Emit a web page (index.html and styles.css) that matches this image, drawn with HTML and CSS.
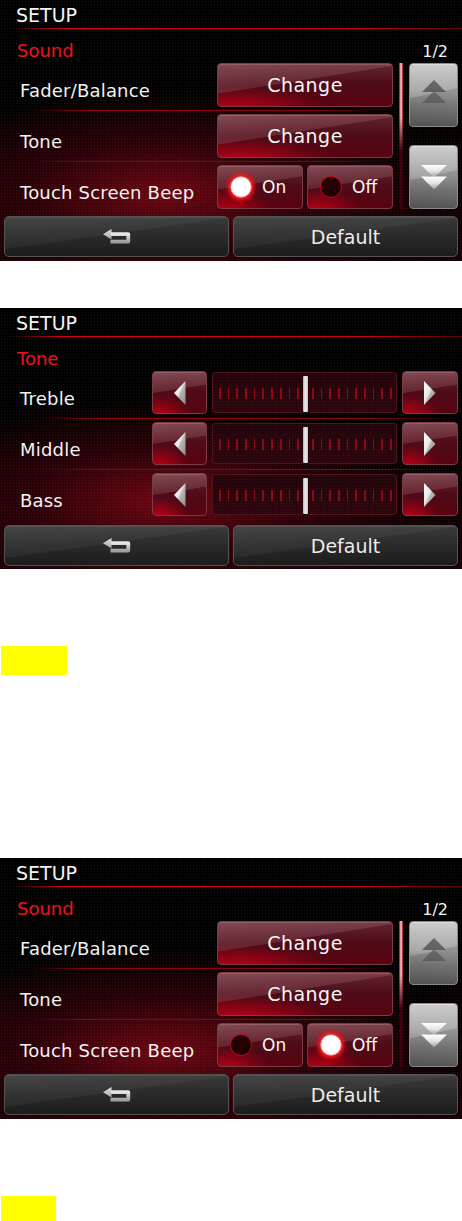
FILE: index.html
```html
<!DOCTYPE html>
<html>
<head>
<meta charset="utf-8">
<title>Setup</title>
<link rel="stylesheet" href="styles.css">
</head>
<body>
<svg class="defs" width="0" height="0">
  <defs>
    <linearGradient id="silver" x1="0" y1="0" x2="0" y2="1">
      <stop offset="0" stop-color="#ffffff"/>
      <stop offset="0.5" stop-color="#e4e4e4"/>
      <stop offset="1" stop-color="#9a9a9a"/>
    </linearGradient>
    <linearGradient id="silverh" x1="0" y1="0" x2="1" y2="1">
      <stop offset="0" stop-color="#ffffff"/>
      <stop offset="0.45" stop-color="#e8e8e8"/>
      <stop offset="0.55" stop-color="#b4b4b4"/>
      <stop offset="1" stop-color="#8c8c8c"/>
    </linearGradient>
    <linearGradient id="backg" x1="0" y1="0" x2="0" y2="1">
      <stop offset="0" stop-color="#e6e6e6"/>
      <stop offset="1" stop-color="#a0a0a0"/>
    </linearGradient>
  </defs>
</svg>

<div class="panel">
  <div class="hdr">SETUP</div>
  <div class="sub"><span class="sect">Sound</span><span class="page">1/2</span></div>
  <div class="body">
    <div class="rows narrow">
      <div class="row">
        <div class="lbl">Fader/Balance</div>
        <div class="ctrl"><div class="rbtn full">Change</div></div>
      </div>
      <div class="sep"></div>
      <div class="row">
        <div class="lbl">Tone</div>
        <div class="ctrl"><div class="rbtn full">Change</div></div>
      </div>
      <div class="sep"></div>
      <div class="row">
        <div class="lbl">Touch Screen Beep</div>
        <div class="ctrl">
          <div class="rbtn half"><span class="dot on"></span><span class="opt">On</span></div>
          <div class="rbtn half"><span class="dot"></span><span class="opt">Off</span></div>
        </div>
      </div>
    </div>
    <div class="track"><div class="thumb"></div></div>
    <div class="scroll">
      <div class="gbtn up">
        <svg width="24" height="24" viewBox="0 0 24 24"><polygon points="12,0 24,12 0,12" fill="rgba(50,50,50,0.6)"/><polygon points="12,11 24,23 0,23" fill="rgba(60,60,60,0.45)"/></svg>
      </div>
      <div class="gbtn">
        <svg width="26" height="25" viewBox="0 0 26 25"><polygon points="0,0 26,0 13,12.5" fill="url(#silver)"/><polygon points="0,11.5 26,11.5 13,24.5" fill="url(#silver)"/></svg>
      </div>
    </div>
  </div>
  <div class="foot">
    <div class="dbtn"><svg width="28" height="16" viewBox="0 0 28 16"><polygon points="0,5.3 8.5,0 8.5,10.6" fill="url(#backg)"/><path d="M8 5.2 H25.3 V12.6 H7.5" fill="none" stroke="url(#backg)" stroke-width="3.8" stroke-linejoin="round"/></svg></div>
    <div class="dbtn">Default</div>
  </div>
</div>

<div class="panel p2">
  <div class="hdr">SETUP</div>
  <div class="sub"><span class="sect">Tone</span></div>
  <div class="body">
    <div class="rows wide">
      <div class="row">
        <div class="lbl">Treble</div>
        <div class="abtn"><svg width="12" height="24" viewBox="0 0 12 24"><polygon points="11.5,0 11.5,24 0,12" fill="url(#silverh)"/></svg></div>
        <div class="slider"><div class="ticks"><i></i><i></i><i></i><i></i><i></i><i></i><i></i><i></i><i></i><i></i></div><div class="knob"></div><div class="ticks"><i></i><i></i><i></i><i></i><i></i><i></i><i></i><i></i><i></i><i></i></div></div>
        <div class="abtn"><svg width="12" height="24" viewBox="0 0 12 24"><polygon points="0,0 0,24 11.5,12" fill="url(#silverh)"/></svg></div>
      </div>
      <div class="sep"></div>
      <div class="row">
        <div class="lbl">Middle</div>
        <div class="abtn"><svg width="12" height="24" viewBox="0 0 12 24"><polygon points="11.5,0 11.5,24 0,12" fill="url(#silverh)"/></svg></div>
        <div class="slider"><div class="ticks"><i></i><i></i><i></i><i></i><i></i><i></i><i></i><i></i><i></i><i></i></div><div class="knob"></div><div class="ticks"><i></i><i></i><i></i><i></i><i></i><i></i><i></i><i></i><i></i><i></i></div></div>
        <div class="abtn"><svg width="12" height="24" viewBox="0 0 12 24"><polygon points="0,0 0,24 11.5,12" fill="url(#silverh)"/></svg></div>
      </div>
      <div class="sep"></div>
      <div class="row">
        <div class="lbl">Bass</div>
        <div class="abtn"><svg width="12" height="24" viewBox="0 0 12 24"><polygon points="11.5,0 11.5,24 0,12" fill="url(#silverh)"/></svg></div>
        <div class="slider"><div class="ticks"><i></i><i></i><i></i><i></i><i></i><i></i><i></i><i></i><i></i><i></i></div><div class="knob"></div><div class="ticks"><i></i><i></i><i></i><i></i><i></i><i></i><i></i><i></i><i></i><i></i></div></div>
        <div class="abtn"><svg width="12" height="24" viewBox="0 0 12 24"><polygon points="0,0 0,24 11.5,12" fill="url(#silverh)"/></svg></div>
      </div>
    </div>
  </div>
  <div class="foot">
    <div class="dbtn"><svg width="28" height="16" viewBox="0 0 28 16"><polygon points="0,5.3 8.5,0 8.5,10.6" fill="url(#backg)"/><path d="M8 5.2 H25.3 V12.6 H7.5" fill="none" stroke="url(#backg)" stroke-width="3.8" stroke-linejoin="round"/></svg></div>
    <div class="dbtn">Default</div>
  </div>
</div>

<div class="mark m1"></div>

<div class="panel p3">
  <div class="hdr">SETUP</div>
  <div class="sub"><span class="sect">Sound</span><span class="page">1/2</span></div>
  <div class="body">
    <div class="rows narrow">
      <div class="row">
        <div class="lbl">Fader/Balance</div>
        <div class="ctrl"><div class="rbtn full">Change</div></div>
      </div>
      <div class="sep"></div>
      <div class="row">
        <div class="lbl">Tone</div>
        <div class="ctrl"><div class="rbtn full">Change</div></div>
      </div>
      <div class="sep"></div>
      <div class="row">
        <div class="lbl">Touch Screen Beep</div>
        <div class="ctrl">
          <div class="rbtn half"><span class="dot"></span><span class="opt">On</span></div>
          <div class="rbtn half"><span class="dot on"></span><span class="opt">Off</span></div>
        </div>
      </div>
    </div>
    <div class="track"><div class="thumb"></div></div>
    <div class="scroll">
      <div class="gbtn up">
        <svg width="24" height="24" viewBox="0 0 24 24"><polygon points="12,0 24,12 0,12" fill="rgba(50,50,50,0.6)"/><polygon points="12,11 24,23 0,23" fill="rgba(60,60,60,0.45)"/></svg>
      </div>
      <div class="gbtn">
        <svg width="26" height="25" viewBox="0 0 26 25"><polygon points="0,0 26,0 13,12.5" fill="url(#silver)"/><polygon points="0,11.5 26,11.5 13,24.5" fill="url(#silver)"/></svg>
      </div>
    </div>
  </div>
  <div class="foot">
    <div class="dbtn"><svg width="28" height="16" viewBox="0 0 28 16"><polygon points="0,5.3 8.5,0 8.5,10.6" fill="url(#backg)"/><path d="M8 5.2 H25.3 V12.6 H7.5" fill="none" stroke="url(#backg)" stroke-width="3.8" stroke-linejoin="round"/></svg></div>
    <div class="dbtn">Default</div>
  </div>
</div>

<div class="mark m2"></div>
</body>
</html>
```

FILE: styles.css
```css
* { box-sizing: border-box; margin: 0; padding: 0; }
html, body { background: #fff; }
body { margin: 0; width: 462px; font-family: "DejaVu Sans", "Liberation Sans", sans-serif; }
.defs { position: absolute; width: 0; height: 0; overflow: hidden; }

.panel {
  width: 462px;
  height: 261px;
  display: flex;
  flex-direction: column;
  color: #f0f0f0;
  overflow: hidden;
  background:
    radial-gradient(rgba(255,255,255,0.05) 0.6px, transparent 1.1px) 0 0 / 3px 3px,
    radial-gradient(ellipse 58% 40% at 36% 74%, rgba(125,6,20,0.85) 0%, rgba(70,0,10,0.55) 50%, rgba(0,0,0,0) 100%),
    linear-gradient(180deg, #000 0%, #000 38%, #160003 100%);
}
.p2 { margin-top: 47px; }
.p3 { margin-top: 183px; }
.mark { background: #ffff00; margin-left: 1px; height: 29px; margin-top: 77px; }
.m1 { width: 66px; }
.m2 { width: 55px; }

.hdr {
  height: 29px;
  padding: 3px 0 0 16px;
  font-size: 19px;
  line-height: 25px;
  color: #f4f4f4;
  background: linear-gradient(90deg, rgba(220,0,16,0) 2%, #e00012 14%, #d00010 78%, #5a0008 100%) left bottom / 100% 1px no-repeat;
}
.sub {
  height: 34px;
  display: flex;
  justify-content: space-between;
  align-items: baseline;
  padding: 12px 14px 0 17px;
}
.sect { font-size: 18px; line-height: 20px; color: #f2101a; }
.page { font-size: 16px; line-height: 20px; color: #f4f4f4; }

.body { display: flex; height: 146px; padding-right: 4px; }
.rows { display: flex; flex-direction: column; }
.rows.narrow { width: 393px; }
.rows.wide { flex: 1; }
.row { display: flex; height: 44px; }
.rows.wide .row { height: 43px; }
.sep {
  height: 7px;
  background: linear-gradient(90deg, rgba(150,0,16,0) 8%, #900012 22%, #8a0012 80%, rgba(120,0,16,0) 100%) left center / 100% 1px no-repeat;
}
.rows.wide .sep { height: 8px; }
.lbl {
  flex: 1;
  padding: 18px 0 0 20px;
  font-size: 18px;
  line-height: 20px;
  letter-spacing: 0.2px;
  color: #f2f2f2;
}
.ctrl { width: 176px; display: flex; gap: 4px; }

.rbtn {
  height: 44px;
  border: 1px solid #7c3a44;
  border-radius: 4px;
  display: flex;
  align-items: center;
  color: #f6f6f6;
  background:
    linear-gradient(171deg, rgba(255,220,225,0.20) 0%, rgba(255,210,215,0.13) 42%, rgba(255,255,255,0) 43%),
    radial-gradient(ellipse 70% 75% at 12% 112%, rgba(200,0,24,0.95) 0%, rgba(170,0,20,0) 75%),
    linear-gradient(180deg, #622630 0%, #4e0c18 48%, #5a0210 100%);
  box-shadow: inset 0 1px 0 rgba(255,200,200,0.18);
}
.rbtn.full { flex: 1; justify-content: center; font-size: 19px; letter-spacing: 0.5px; }
.rbtn.half { width: 86px; padding-left: 12px; gap: 10px; }
.opt { font-size: 17px; line-height: 20px; }
.dot {
  width: 22px;
  height: 22px;
  border-radius: 50%;
  border: 1.5px solid #d40012;
  background: radial-gradient(circle at 50% 45%, #2a0206 0%, #140002 100%);
}
.dot.on {
  border: 1px solid #ff6a6a;
  background: radial-gradient(circle at 50% 45%, #ffffff 0%, #ffffff 55%, #ffd6d6 100%);
  box-shadow: 0 0 3px 2px rgba(255,20,30,0.9), 0 0 7px 2px rgba(255,0,0,0.5);
}

.track {
  width: 4px;
  margin-left: 6px;
  height: 146px;
  background: linear-gradient(90deg, #2a0006, #4a000c 50%, #2a0006);
}
.thumb {
  height: 60%;
  background:
    linear-gradient(180deg, rgba(42,0,6,0) 0%, rgba(42,0,6,0) 62%, rgba(60,0,10,1) 100%),
    linear-gradient(90deg, #a00016 0%, #ffd8dc 50%, #a00016 100%);
}
.scroll {
  width: 49px;
  margin-left: 6px;
  display: flex;
  flex-direction: column;
  justify-content: space-between;
}
.gbtn {
  height: 64px;
  border: 1px solid #8a8a8a;
  border-radius: 4px;
  display: flex;
  align-items: center;
  justify-content: center;
  background:
    linear-gradient(168deg, rgba(255,255,255,0) 0%, rgba(255,255,255,0) 47%, rgba(0,0,0,0.14) 48%, rgba(0,0,0,0) 100%),
    linear-gradient(180deg, #cdcdcd 0%, #a8a8a8 45%, #7c7c7c 70%, #555 100%);
  box-shadow: inset 0 1px 0 rgba(255,255,255,0.35);
}
.gbtn.up svg { margin-bottom: 6px; }

.abtn {
  width: 55px;
  height: 43px;
  border: 1px solid #7c3a44;
  border-radius: 4px;
  display: flex;
  align-items: center;
  justify-content: center;
  background:
    linear-gradient(171deg, rgba(255,220,225,0.20) 0%, rgba(255,210,215,0.13) 42%, rgba(255,255,255,0) 43%),
    radial-gradient(ellipse 75% 75% at 12% 112%, rgba(200,0,24,0.95) 0%, rgba(170,0,20,0) 75%),
    linear-gradient(180deg, #622630 0%, #4e0c18 48%, #5a0210 100%);
  box-shadow: inset 0 1px 0 rgba(255,200,200,0.18);
}
.abtn:last-child { width: 56px; }
.slider {
  width: 185px;
  height: 41px;
  margin: 1px 5px 0;
  border: 1px solid #52141c;
  border-radius: 3px;
  background:
    radial-gradient(rgba(255,255,255,0.04) 0.6px, transparent 1.1px) 0 0 / 3px 3px,
    linear-gradient(180deg, #22040a 0%, #2c050c 100%);
  display: flex;
  align-items: center;
  padding-left: 6px;
}
.ticks { display: flex; gap: 7px; align-items: center; }
.ticks i { display: block; width: 1.7px; height: 11px; background: #8c0a14; margin-top: 1px; }
.knob {
  width: 5px;
  height: 36px;
  margin: 2px 4px 0 4px;
  border-radius: 1px;
  background: linear-gradient(90deg, #b0b0b0 0%, #eeeeee 45%, #c4c4c4 100%);
  box-shadow: 0 2px 0 #111;
}

.foot {
  height: 41px;
  margin-top: 7px;
  padding: 0 4px;
  display: flex;
  gap: 4px;
}
.p2 .foot { margin-top: 8px; }
.dbtn {
  flex: 1;
  border: 1px solid #545454;
  border-radius: 5px;
  display: flex;
  align-items: center;
  justify-content: center;
  font-size: 19px;
  color: #ececec;
  background:
    linear-gradient(172deg, rgba(255,255,255,0.06) 0%, rgba(255,255,255,0.04) 45%, rgba(255,255,255,0) 46%),
    linear-gradient(180deg, #3a3a3a 0%, #2a2a2a 50%, #1c1c1c 100%);
  box-shadow: inset 0 1px 0 rgba(255,255,255,0.08);
}
```
